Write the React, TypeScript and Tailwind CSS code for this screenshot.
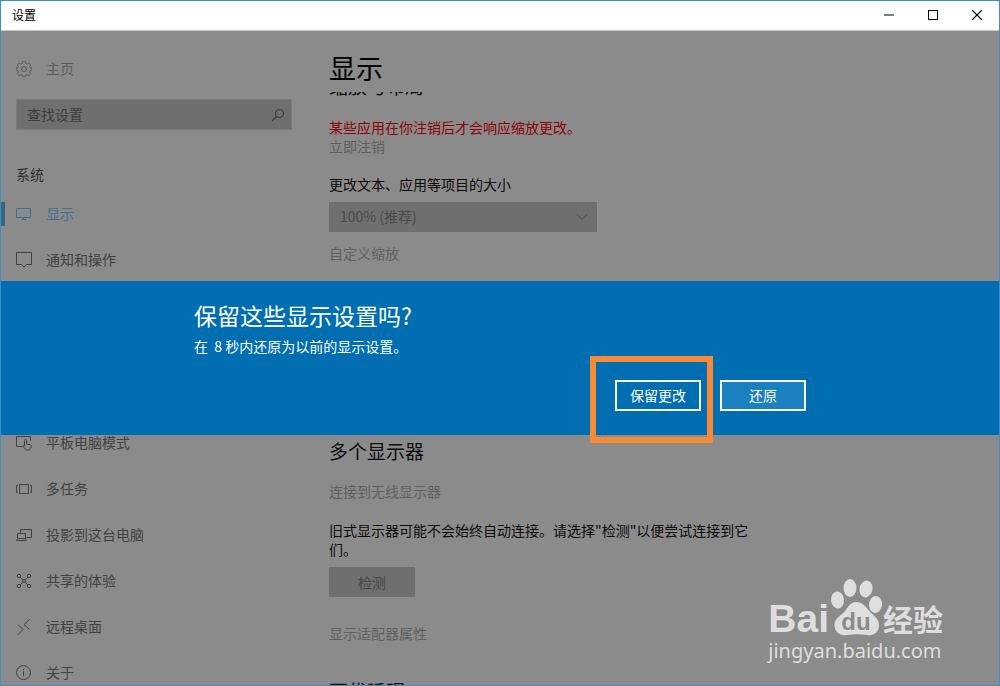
import { Minus, X } from "lucide-react";
import { useState, type ReactNode } from "react";

interface NavItem {
  label: string;
  icon: ReactNode;
}

function Glyph({ children }: { children: ReactNode }) {
  return (
    <svg
      aria-hidden="true"
      viewBox="0 0 16 16"
      className="size-4 shrink-0"
      fill="none"
      stroke="currentColor"
      strokeWidth="1"
    >
      {children}
    </svg>
  );
}

const topItems: NavItem[] = [
  {
    label: "显示",
    icon: (
      <Glyph>
        <path d="M.5 2.500h14v9H.5zM7.500 11.500v2M5 13.500h5" />
      </Glyph>
    ),
  },
  {
    label: "通知和操作",
    icon: (
      <Glyph>
        <path d="M.5.5h15v12h-5L8 15l-2.500-2.500H.5z" />
      </Glyph>
    ),
  },
];

const bottomItems: NavItem[] = [
  {
    label: "平板电脑模式",
    icon: (
      <Glyph>
        <path d="M6.500 11.500H.5v-10h14v4" />
        <path d="M8.500 11V5.500a1 1 0 0 1 2 0V9l4 .8q1 .3.8 1.400l-.6 2.300q-.5 1.500-2 1.500h-1.700q-1 0-1.600-.8L6.700 11q.8-1 1.800 0" />
      </Glyph>
    ),
  },
  {
    label: "多任务",
    icon: (
      <Glyph>
        <path d="M3.500 3.500h9v9h-9zM2 4.500H.5v7H2M14 4.500h1.500v7H14" />
      </Glyph>
    ),
  },
  {
    label: "投影到这台电脑",
    icon: (
      <Glyph>
        <path d="M4.500 6.500v-4h11v8h-5M1.500 6.500h8v5h-8zM.5 13.500h10l-1-2h-8z" />
      </Glyph>
    ),
  },
  {
    label: "共享的体验",
    icon: (
      <Glyph>
        <circle cx="3" cy="3" r="1.700" />
        <circle cx="13" cy="3" r="1.700" />
        <circle cx="3" cy="13" r="1.700" />
        <circle cx="13" cy="13" r="1.700" />
        <circle cx="8" cy="8" r="1.500" />
        <path d="M4 4l3 3M12 4L9 7M4 12l3-3M12 12L9 9" />
      </Glyph>
    ),
  },
  {
    label: "远程桌面",
    icon: (
      <Glyph>
        <path d="M2 5.500l5 5-5 5M13.500.5l-5.500 5 5.500 5" />
      </Glyph>
    ),
  },
  {
    label: "关于",
    icon: (
      <Glyph>
        <circle cx="7.500" cy="7.500" r="7" />
        <path d="M7.500 6.500V11M7.500 4v1.200" />
      </Glyph>
    ),
  },
];

function NavList({ items, active }: { items: NavItem[]; active?: string }) {
  return (
    <ul>
      {items.map((item) => (
        <li key={item.label}>
          <a
            href="#"
            aria-current={item.label === active ? "page" : undefined}
            className={`flex h-[46px] items-center ${
              item.label === active ? "text-[#3f728f]" : "text-[#424242]"
            }`}
          >
            <span
              className={`mr-[11px] h-6 w-1 ${
                item.label === active ? "bg-[#3b6680]" : ""
              }`}
            />
            {item.icon}
            <span className="ml-[14px] pb-[2px]">{item.label}</span>
          </a>
        </li>
      ))}
    </ul>
  );
}

function TitleBar() {
  return (
    <header className="flex h-[30px] shrink-0 items-center justify-between border-b border-[#c8c8c8] bg-white pl-[11px] text-xs text-black">
      <span className="pb-[2px]">设置</span>
      <div className="flex pb-[2px]">
        <button
          type="button"
          aria-label="最小化"
          className="flex h-7 w-11 items-center justify-center"
        >
          <Minus aria-hidden="true" className="size-4" strokeWidth={1.5} />
        </button>
        <button
          type="button"
          aria-label="最大化"
          className="flex h-7 w-11 items-center justify-center"
        >
          <span className="size-[10px] border border-black" />
        </button>
        <button
          type="button"
          aria-label="关闭"
          className="flex h-7 w-11 items-center justify-center"
        >
          <X aria-hidden="true" className="size-[18px]" strokeWidth={1.5} />
        </button>
      </div>
    </header>
  );
}

function Sidebar() {
  return (
    <aside className="w-[328px] shrink-0 pt-[15px]">
      <a
        href="#"
        className="flex h-[46px] items-center gap-[14px] pl-[15px] text-[#5c5c5c]"
      >
        <Glyph>
          <circle cx="8" cy="8" r="2.500" />
          <path
            strokeLinejoin="round"
            d="M6.700.6h2.600l.5 2 1.200.5 1.800-1.100 1.900 1.900-1.100 1.800.5 1.100 1.400.4v1.900l-1.400.6-.5 1.200 1.100 1.800-1.900 1.900-1.800-1.100-1.200.5-.5 1.500H6.700l-.5-1.500-1.200-.5-1.800 1.100-1.900-1.900 1.100-1.800-.5-1.200-1.400-.6V7.200l1.400-.4.5-1.100-1.100-1.800L3.200 2 5 3.100l1.200-.5z"
          />
        </Glyph>
        <span className="pb-[2px]">主页</span>
      </a>

      <label className="mt-[7px] mr-[37px] ml-[15px] flex h-[31px] items-center border border-[#7a7a7a] bg-[#6f6f6f] pr-[6px] pl-[10px] text-[#3e3e3e]">
        <span className="sr-only">查找设置</span>
        <input
          type="text"
          placeholder="查找设置"
          className="h-full min-w-0 flex-1 bg-transparent pb-[2px] outline-none placeholder:text-[#3e3e3e]"
        />
        <svg
          aria-hidden="true"
          viewBox="0 0 14 14"
          className="size-[14px]"
          fill="none"
          stroke="currentColor"
          strokeWidth="1.200"
        >
          <circle cx="8.500" cy="5.500" r="4" />
          <path d="M5.500 8.500l-4.500 4.500" />
        </svg>
      </label>

      <h2 className="mt-[29px] mb-px h-[31px] pl-[15px] leading-[31px] text-[#2e2e2e]">
        系统
      </h2>
      <nav aria-label="系统">
        <NavList items={topItems} active="显示" />
        <div className="mt-[137px]">
          <NavList items={bottomItems} />
        </div>
      </nav>
    </aside>
  );
}

function DisplaySettings() {
  return (
    <main className="flex min-w-0 flex-1 flex-col">
      <h1 className="mt-5 h-[41px] shrink-0 text-[27px] leading-[34px] text-black">
        显示
      </h1>
      <div className="min-h-0 flex-1 overflow-hidden leading-[19px] text-[#0c0c0c]">
        <h2 className="-mt-5 text-[19px] leading-7">缩放与布局</h2>
        <p className="mt-[18px] text-[#8c0506]">
          某些应用在你注销后才会响应缩放更改。
        </p>
        <a href="#" className="block text-[#5f5f5f]">
          立即注销
        </a>
        <label htmlFor="scale" className="mt-[19px] block">
          更改文本、应用等项目的大小
        </label>
        <div className="relative mt-2 w-[268px] text-[#4a4a4a]">
          <select
            id="scale"
            className="h-[30px] w-full appearance-none bg-[#6f6f6f] pb-[2px] pl-[11px]"
          >
            <option>100% (推荐)</option>
          </select>
          <svg
            aria-hidden="true"
            viewBox="0 0 12 8"
            className="pointer-events-none absolute top-[11px] right-[9px] h-2 w-3"
            fill="none"
            stroke="currentColor"
          >
            <path d="M.5 1L6 6.500 11.500 1" />
          </svg>
        </div>
        <a href="#" className="mt-3 block text-[#606060]">
          自定义缩放
        </a>

        <h2 className="mt-[174px] text-[19px] leading-7">多个显示器</h2>
        <a href="#" className="mt-[17px] block text-[#606060]">
          连接到无线显示器
        </a>
        <p className="mt-5 max-w-[428px]">
          旧式显示器可能不会始终自动连接。请选择"检测"以便尝试连接到它们。
        </p>
        <button
          type="button"
          className="mt-2 h-[30px] w-[86px] bg-[#6f6f6f] text-[#464646]"
        >
          检测
        </button>
        <a href="#" className="mt-[27px] block text-[#606060]">
          显示适配器属性
        </a>
        <h2 className="mt-[34px] text-[19px] leading-7">更优睡眠</h2>
      </div>
    </main>
  );
}

function KeepChangesDialog({ onClose }: { onClose: () => void }) {
  return (
    <div className="absolute inset-0 flex items-center">
      <section
        role="dialog"
        aria-labelledby="dialog-title"
        className="w-full bg-[#006eb0] pt-[18px] pb-6 text-white"
      >
        <div className="mx-auto max-w-[612px]">
          <h2 id="dialog-title" className="text-[23px] leading-8">
            保留这些显示设置吗?
          </h2>
          <p className="mt-[6px] leading-[19px] whitespace-pre">
            在  8 秒内还原为以前的显示设置。
          </p>
          <div className="mt-6 flex justify-end gap-[19px]">
            <div className="relative">
              <button
                type="button"
                onClick={onClose}
                className="h-[31px] w-[86px] border-2 border-white pb-[2px]"
              >
                保留更改
              </button>
              <span className="pointer-events-none absolute -top-6 -right-3 -bottom-8 -left-[25px] border-[6px] border-[#f98b37]" />
            </div>
            <button
              type="button"
              onClick={onClose}
              className="h-[31px] w-[86px] border-2 border-white bg-[#1a80c0] pb-[2px]"
            >
              还原
            </button>
          </div>
        </div>
      </section>
    </div>
  );
}

function Watermark() {
  return (
    <div className="pointer-events-none absolute right-[56px] bottom-5 text-[#dedede]">
      <div className="flex h-[60px] items-end">
        <span className="font-['Liberation_Sans',sans-serif] text-[39px] leading-[36px] font-bold">
          Bai
        </span>
        <div className="relative h-[60px] w-[54px]">
          <svg aria-hidden="true" viewBox="0 0 54 60" fill="currentColor">
            <ellipse cx="8.500" cy="23" rx="6.500" ry="8.500" transform="rotate(-6 8.500 23)" />
            <ellipse cx="21" cy="11" rx="6.500" ry="9" />
            <ellipse cx="37" cy="12" rx="6.500" ry="8.500" transform="rotate(12 37 12)" />
            <ellipse cx="46.500" cy="27.500" rx="6.500" ry="8.500" transform="rotate(4 46.500 27.500)" />
            <path d="M27.500 25c5 0 8 3 11 7 4 5 11.500 9 11.500 16 0 8-6 11-12 10-7-1-13-1-20 0-7 1-12.500-3-12.500-10 0-7 6.500-9 10.500-14 4-6 6.500-9 11.500-9z" />
          </svg>
          <span className="absolute inset-x-0 bottom-[3px] text-center font-['Liberation_Sans',sans-serif] text-[24px] leading-6 font-bold text-[#8b8b8b]">
            du
          </span>
        </div>
        <span className="text-[30px] leading-[38px] font-bold">经验</span>
      </div>
      <div className="font-['Noto_Sans',sans-serif] text-[20px] leading-7">
        jingyan.baidu.com
      </div>
    </div>
  );
}

export default function App() {
  const [confirming, setConfirming] = useState(true);

  return (
    <div className="relative flex h-screen flex-col overflow-hidden border border-[#3b8fc4] bg-[#8b8b8b] font-['Noto_Sans_CJK_SC',sans-serif] text-sm">
      <TitleBar />
      <div className="relative flex min-h-0 flex-1">
        <Sidebar />
        <DisplaySettings />
        {confirming && (
          <KeepChangesDialog onClose={() => setConfirming(false)} />
        )}
      </div>
      <Watermark />
    </div>
  );
}
